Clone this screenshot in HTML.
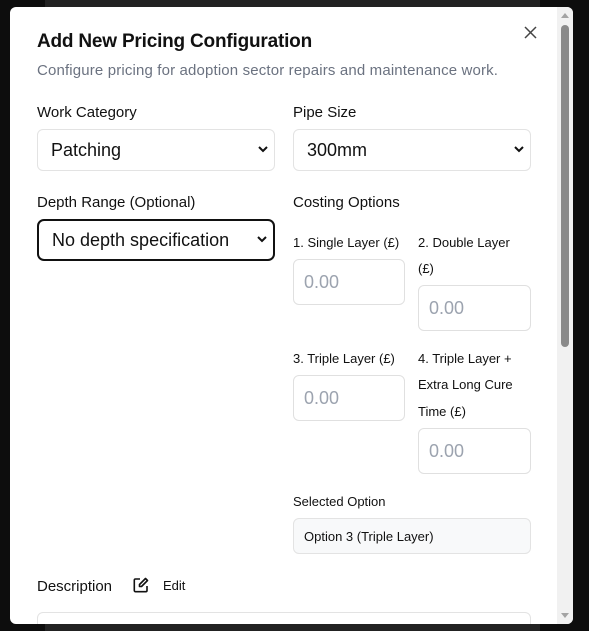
<!DOCTYPE html>
<html><head><style>
*{box-sizing:border-box;margin:0;padding:0}
body{width:589px;height:631px;background:#0d0d0d;position:relative;overflow:hidden;font-family:"Liberation Sans",Arial,sans-serif;color:#111}
.bgp{position:absolute;left:45px;top:0;width:495px;height:631px;background:#222}
.m{position:absolute;left:10px;top:7px;width:563px;height:617px;background:#fff;border-radius:6px;overflow:hidden}
.a{position:absolute;white-space:nowrap}
.sel{position:absolute;border:1px solid #e3e3e3;border-radius:6px;background:#fff;font-size:18px;padding-left:13px;display:flex;align-items:center}
.sel svg{position:absolute;right:6px;top:50%;margin-top:-4px}
.in{position:absolute;border:1px solid #e0e0e0;border-radius:6px;font-size:18px;color:#9ca3af;padding-left:10px;display:flex;align-items:center;width:113px;height:46px}
.l{font-size:15px}
.s{font-size:13px}
</style></head><body>
<div class="bgp"></div>
<div class="m">
<div class="a" style="left:27px;top:24px;font-size:19px;font-weight:bold;letter-spacing:-0.2px">Add New Pricing Configuration</div>
<div class="a" style="left:27px;top:55px;font-size:15px;color:#6b7280;letter-spacing:0.15px">Configure pricing for adoption sector repairs and maintenance work.</div>
<svg class="a" style="left:514px;top:19px" width="13" height="13" viewBox="0 0 13 13"><path d="M1 1L12 12M12 1L1 12" stroke="#444" stroke-width="1.5"/></svg>
<div class="a l" style="left:27px;top:97px">Work Category</div>
<div class="a l" style="left:283px;top:97px">Pipe Size</div>
<div class="sel" style="left:27px;top:122px;width:238px;height:42px">Patching<svg width="10" height="7" viewBox="0 0 10 7"><path d="M1 1L5 5L9 1" stroke="#111" stroke-width="2" fill="none"/></svg></div>
<div class="sel" style="left:283px;top:122px;width:238px;height:42px">300mm<svg width="10" height="7" viewBox="0 0 10 7"><path d="M1 1L5 5L9 1" stroke="#111" stroke-width="2" fill="none"/></svg></div>
<div class="a l" style="left:27px;top:187px">Depth Range (Optional)</div>
<div class="a l" style="left:283px;top:187px">Costing Options</div>
<div class="sel" style="left:27px;top:212px;width:238px;height:42px;border:2px solid #111;border-radius:7px">No depth specification<svg width="10" height="7" viewBox="0 0 10 7"><path d="M1 1L5 5L9 1" stroke="#111" stroke-width="2" fill="none"/></svg></div>
<div class="a s" style="left:283px;top:228px">1. Single Layer (£)</div>
<div class="a s" style="left:408px;top:228px">2. Double Layer</div>
<div class="a s" style="left:408px;top:254px">(£)</div>
<div class="in" style="left:283px;top:252px;width:112px">0.00</div>
<div class="in" style="left:408px;top:278px">0.00</div>
<div class="a s" style="left:283px;top:344px">3. Triple Layer (£)</div>
<div class="a s" style="left:408px;top:344px">4. Triple Layer +</div>
<div class="a s" style="left:408px;top:370px">Extra Long Cure</div>
<div class="a s" style="left:408px;top:397px">Time (£)</div>
<div class="in" style="left:283px;top:368px;width:112px">0.00</div>
<div class="in" style="left:408px;top:421px">0.00</div>
<div class="a s" style="left:283px;top:487px">Selected Option</div>
<div class="a" style="left:283px;top:511px;width:238px;height:36px;background:#f8f9fa;border:1px solid #e3e3e3;border-radius:6px;font-size:13px;padding:10px 10px">Option 3 (Triple Layer)</div>
<div class="a l" style="left:27px;top:571px">Description</div>
<svg class="a" style="left:123px;top:570px" width="16" height="16" viewBox="0 0 16 16"><path d="M7 2H2.5A1.2 1.2 0 0 0 1.3 3.2v10.3a1.2 1.2 0 0 0 1.2 1.2h10.3a1.2 1.2 0 0 0 1.2-1.2V9" stroke="#111" stroke-width="1.6" fill="none"/><path d="M12.5 1.5l2 2L8.5 9.5H6.5V7.5z" stroke="#111" stroke-width="1.6" fill="none" stroke-linejoin="round"/></svg>
<div class="a s" style="left:153px;top:571px">Edit</div>
<div class="a" style="left:27px;top:605px;width:494px;height:30px;border:1px solid #e3e3e3;border-radius:6px"></div>
<div class="a" style="left:547px;top:0;width:16px;height:617px;background:#f1f1f1"></div>
<div class="a" style="left:551px;top:18px;width:8px;height:322px;background:#8a8a8a;border-radius:4px"></div>
<svg class="a" style="left:550px;top:4px" width="10" height="8"><path d="M1 7L5 2L9 7z" fill="#a3a3a3"/></svg>
<svg class="a" style="left:550px;top:605px" width="10" height="8"><path d="M1 1L5 6L9 1z" fill="#a3a3a3"/></svg>
</div>
</body></html>
